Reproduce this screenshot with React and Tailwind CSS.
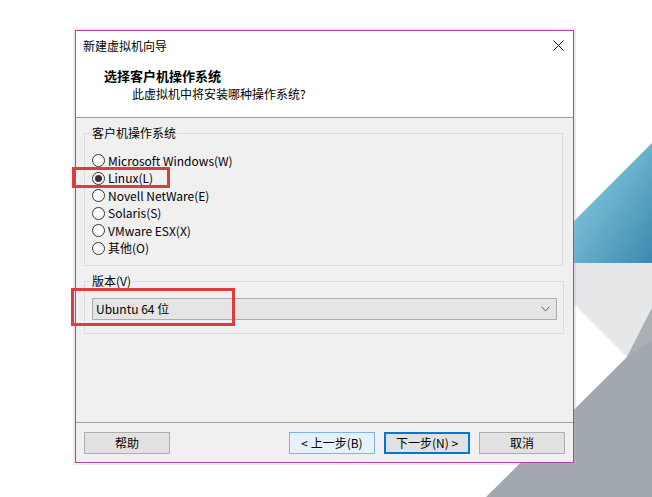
import React from "react";

const FONT = "font-['Noto_Sans_CJK_SC','Noto_Sans',sans-serif]";

function Radio({ label, checked }) {
  return (
    <div className="flex h-[17.5px] items-center gap-[3px]">
      <span className="flex h-[13px] w-[13px] items-center justify-center rounded-full border border-[#333333] bg-white">
        {checked && <span className="h-[7px] w-[7px] rounded-full bg-[#333333]" />}
      </span>
      <span className="text-[12px] leading-[16px] text-black">{label}</span>
    </div>
  );
}

function Btn({ children, variant }) {
  const cls =
    variant === "default"
      ? "border-2 border-[#0078d7] bg-[#e1e1e1]"
      : variant === "hover"
      ? "border border-[#7eb4ea] bg-[#e5f1fb]"
      : "border border-[#adadad] bg-[#e1e1e1]";
  return (
    <div className={`flex h-[22px] w-[86px] items-center justify-center text-[12px] leading-[16px] text-black ${cls}`}>
      {children}
    </div>
  );
}

export default function App() {
  const options = [
    "Microsoft Windows(W)",
    "Linux(L)",
    "Novell NetWare(E)",
    "Solaris(S)",
    "VMware ESX(X)",
    "其他(O)",
  ];
  return (
    <div className={`relative h-[497px] w-[652px] overflow-hidden bg-white pl-[75px] pt-[30px] ${FONT}`}>
      <svg className="absolute left-0 top-0" width="652" height="497" viewBox="0 0 652 497">
        <defs>
          <linearGradient id="teal" x1="560" y1="200" x2="652" y2="263" gradientUnits="userSpaceOnUse">
            <stop offset="0" stopColor="#86c9de" />
            <stop offset="1" stopColor="#3a89ae" />
          </linearGradient>
        </defs>
        <polygon points="652,143 652,263 532,263" fill="url(#teal)" />
        <polygon points="533,263 652,263 652,308 627,357" fill="#e6e7e9" />
        <polygon points="652,308 652,497 486,497 627,357" fill="#a1a8ae" />
        <polygon points="652,308 627,357 652,340" fill="#abb0b5" />
      </svg>

      <div className="relative flex h-[433px] w-[499px] flex-col border border-[#b0449e] bg-[#f0f0f0] shadow-[0_0_0_2px_rgba(214,150,200,0.25)]">
        {/* title bar */}
        <div className="flex h-[29px] items-center justify-between bg-white pl-[7px] pr-[9px]">
          <span className="text-[12px] leading-[16px] text-black">新建虚拟机向导</span>
          <svg width="11" height="11" viewBox="0 0 11 11">
            <path d="M0.5 0.5 L10.5 10.5 M10.5 0.5 L0.5 10.5" stroke="#111" strokeWidth="1" />
          </svg>
        </div>
        {/* header */}
        <div className="flex h-[58px] flex-col border-b border-[#a0a0a0] bg-white pt-[7px]">
          <div className="pl-[28px] text-[13px] font-bold leading-[18px] text-black">选择客户机操作系统</div>
          <div className="pl-[56px] text-[12px] leading-[18px] text-black">此虚拟机中将安装哪种操作系统?</div>
        </div>
        {/* content */}
        <div className="flex h-[305px] flex-col border-b border-[#a0a0a0] pl-[8px] pr-[10px]">
          <fieldset className="mt-[7px] border border-[#dcdcdc] pb-[8px] pl-[6px] pr-[6px]">
            <legend className="px-[1px] text-[12px] leading-[16px] text-black">客户机操作系统</legend>
            <div className="flex flex-col pl-[1px] pt-[11px]">
              {options.map((o) => (
                <Radio key={o} label={o} checked={o === "Linux(L)"} />
              ))}
            </div>
          </fieldset>
          <fieldset className="mt-[7px] border border-[#dcdcdc] pb-[13px] pl-[6px] pr-[6px]">
            <legend className="px-[1px] text-[12px] leading-[16px] text-black">版本(V)</legend>
            <div className="pl-[1px] pt-[9px]">
              <div className="flex h-[22px] w-[465px] items-center justify-between border border-[#adadad] bg-[#e5e5e5] pl-[3px] pr-[6px]">
                <span className="text-[12px] leading-[16px] text-black">Ubuntu 64 位</span>
                <svg width="9" height="6" viewBox="0 0 9 6">
                  <path d="M0.5 0.8 L4.5 4.8 L8.5 0.8" fill="none" stroke="#555" strokeWidth="1" />
                </svg>
              </div>
            </div>
          </fieldset>
        </div>
        {/* buttons */}
        <div className="flex h-[39px] items-start gap-[9px] px-[8px] pt-[9px]">
          <Btn>帮助</Btn>
          <div className="flex-1" />
          <Btn variant="hover">&lt; 上一步(B)</Btn>
          <Btn variant="default">下一步(N) &gt;</Btn>
          <Btn>取消</Btn>
        </div>
      </div>

      {/* annotation boxes */}
      <div className="absolute left-[72px] top-[167px] h-[21px] w-[98px] border-[3px] border-[#dc3b40]" />
      <div className="absolute left-[71px] top-[288px] h-[38px] w-[164px] border-[3px] border-[#dc3b40]" />
    </div>
  );
}
